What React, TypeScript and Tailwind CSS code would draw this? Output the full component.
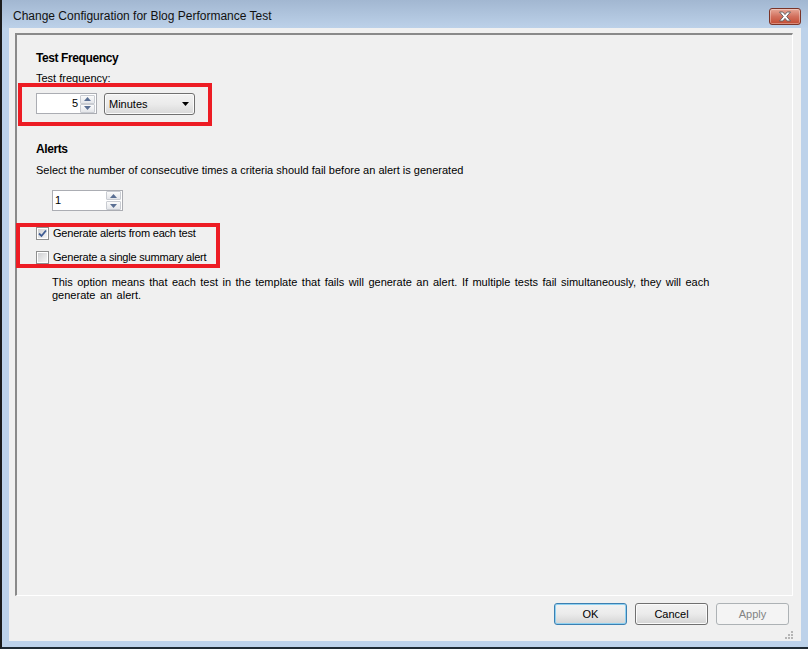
import React from "react";

const SpinButtons = ({ gap }: { gap?: boolean }) => {
  return (
    <div className={`flex flex-col ${gap ? "gap-[1px]" : ""}`}>
      <div className="w-[15px] h-[9px] flex items-center justify-center border border-[#c9ccd2] rounded-[1px] bg-gradient-to-b from-[#fbfbfb] to-[#e4e6ea]">
        <svg width="7" height="4" viewBox="0 0 7 4">
          <path d="M0 4 L3.5 0 L7 4 Z" fill="#5a6f93" />
        </svg>
      </div>
      <div className="w-[15px] h-[9px] flex items-center justify-center border border-[#c9ccd2] rounded-[1px] bg-gradient-to-b from-[#fbfbfb] to-[#e4e6ea]">
        <svg width="7" height="4" viewBox="0 0 7 4">
          <path d="M0 0 L7 0 L3.5 4 Z" fill="#5a6f93" />
        </svg>
      </div>
    </div>
  );
};

const CheckBox = ({ checked }: { checked: boolean }) => {
  return (
    <div className="w-[13px] h-[13px] border border-[#8e8f8f] bg-white p-[1px] flex">
      <div className="w-full h-full bg-gradient-to-br from-[#cfd0d2] to-[#f6f6f6] flex items-center justify-center">
        {checked && (
          <svg width="9" height="9" viewBox="0 0 9 9">
            <path
              d="M1 4.5 L3.5 7 L8 1.5"
              stroke="#3e5c93"
              strokeWidth="1.8"
              fill="none"
            />
          </svg>
        )}
      </div>
    </div>
  );
};

const DialogButton = ({
  label,
  variant,
}: {
  label: string;
  variant: "default" | "normal" | "disabled";
}) => {
  const border =
    variant === "default"
      ? "border-[#3c7fb1] shadow-[inset_0_0_0_1px_#8fd1f1]"
      : variant === "normal"
        ? "border-[#707070] shadow-[inset_0_0_0_1px_#fbfbfb]"
        : "border-[#adb2b5]";
  const bg =
    variant === "disabled"
      ? "bg-[#f4f4f4] text-[#838383]"
      : "bg-gradient-to-b from-[#f2f2f2] via-[#ebebeb] to-[#d4d4d4] text-black";
  return (
    <div
      className={`w-[73px] h-[22px] rounded-[3px] border flex items-center justify-center text-[11px] ${border} ${bg}`}
    >
      {label}
    </div>
  );
};

export default function App() {
  return (
    <div className="w-[808px] h-[649px] flex flex-col bg-[#bdd2ea] border-l-2 border-l-[#1c1c1c] border-b-2 border-b-[#1f2a33] font-['Liberation_Sans',Arial,sans-serif] text-black overflow-hidden">
      {/* title bar */}
      <div className="h-[28px] flex items-start justify-between pl-[11px] pr-[7px] bg-gradient-to-b from-[#a2b7d1] to-[#bcd1e9] shrink-0">
        <div className="pt-[9px] text-[12px] leading-[14px] text-[#111]">
          Change Configuration for Blog Performance Test
        </div>
        <div className="mt-[8px] w-[32px] h-[17px] rounded-[3px] border border-[#7b3427] bg-gradient-to-b from-[#e6a898] via-[#d2705d] to-[#c24a31] shadow-[inset_0_0_0_1px_rgba(255,255,255,0.35)] flex items-center justify-center">
          <svg width="14" height="11" viewBox="0 0 14 11">
            <path
              d="M1.5 1 L4.8 1 L7 3.6 L9.2 1 L12.5 1 L8.7 5.5 L12.5 10 L9.2 10 L7 7.4 L4.8 10 L1.5 10 L5.3 5.5 Z"
              fill="#ffffff"
              stroke="#5b5b5b"
              strokeWidth="0.9"
            />
          </svg>
        </div>
      </div>

      {/* client area */}
      <div className="flex-1 mx-[7px] mb-[6px] bg-[#f0f0f0] flex flex-col pt-[5px] pl-[6px] pr-[8px]">
        {/* panel */}
        <div className="relative h-[563px] border-l-2 border-t-2 border-l-[#8a8a8a] border-t-[#8a8a8a] border-r border-b border-r-white border-b-white bg-[#f0f0f0] flex flex-col pl-[19px] pt-[16px] text-[11px] leading-[13px]">
          <div className="text-[12px] leading-[15px] font-bold tracking-[-0.4px]">
            Test Frequency
          </div>
          <div className="mt-[6px]">Test frequency:</div>
          <div className="mt-[8px] flex items-start gap-[7px]">
            <div className="w-[61px] h-[21px] border border-[#abadb3] bg-white flex items-center justify-end pr-[1px] gap-[2px]">
              <span className="leading-[13px]">5</span>
              <SpinButtons />
            </div>
            <div className="w-[91px] h-[22px] rounded-[3px] border border-[#707070] bg-gradient-to-b from-[#f2f2f2] via-[#ebebeb] to-[#d8d8d8] shadow-[inset_0_0_0_1px_#fbfbfb] flex items-center justify-between pl-[4px] pr-[5px]">
              <span>Minutes</span>
              <svg width="7" height="4" viewBox="0 0 7 4">
                <path d="M0 0 L7 0 L3.5 4 Z" fill="#000" />
              </svg>
            </div>
          </div>

          <div className="mt-[27px] text-[12px] leading-[15px] font-bold tracking-[-0.4px]">
            Alerts
          </div>
          <div className="mt-[7px]">
            Select the number of consecutive times a criteria should fail before
            an alert is generated
          </div>
          <div className="mt-[13px] ml-[16px] w-[71px] h-[21px] border border-[#abadb3] bg-white flex items-center justify-between pl-[2px] pr-[1px]">
            <span>1</span>
            <SpinButtons gap />
          </div>

          <div className="mt-[16px] flex items-center gap-[4px]">
            <CheckBox checked />
            <span className="tracking-[-0.2px]">
              Generate alerts from each test
            </span>
          </div>
          <div className="mt-[11px] flex items-center gap-[4px]">
            <CheckBox checked={false} />
            <span className="tracking-[-0.2px]">
              Generate a single summary alert
            </span>
          </div>

          <div className="mt-[12px] ml-[16px] [word-spacing:1.4px]">
            This option means that each test in the template that fails will
            generate an alert. If multiple tests fail simultaneously, they will
            each
            <br />
            generate an alert.
          </div>

          {/* annotation boxes */}
          <div className="absolute left-[1px] top-[48px] w-[194px] h-[43px] border-4 border-[#ed1c24]" />
          <div className="absolute left-[-1px] top-[188px] w-[204px] h-[45px] border-4 border-[#ed1c24]" />
        </div>

        {/* button row */}
        <div className="mt-[7px] flex justify-end gap-[8px] pr-[4px]">
          <DialogButton label="OK" variant="default" />
          <DialogButton label="Cancel" variant="normal" />
          <DialogButton label="Apply" variant="disabled" />
        </div>
        <div className="flex justify-end mt-[6px]">
          <svg width="8" height="8" viewBox="0 0 8 8">
            <rect x="6" y="0" width="2" height="2" fill="#b5b5b5" />
            <rect x="3" y="3" width="2" height="2" fill="#b5b5b5" />
            <rect x="6" y="3" width="2" height="2" fill="#b5b5b5" />
            <rect x="0" y="6" width="2" height="2" fill="#b5b5b5" />
            <rect x="3" y="6" width="2" height="2" fill="#b5b5b5" />
            <rect x="6" y="6" width="2" height="2" fill="#b5b5b5" />
          </svg>
        </div>
      </div>
    </div>
  );
}
